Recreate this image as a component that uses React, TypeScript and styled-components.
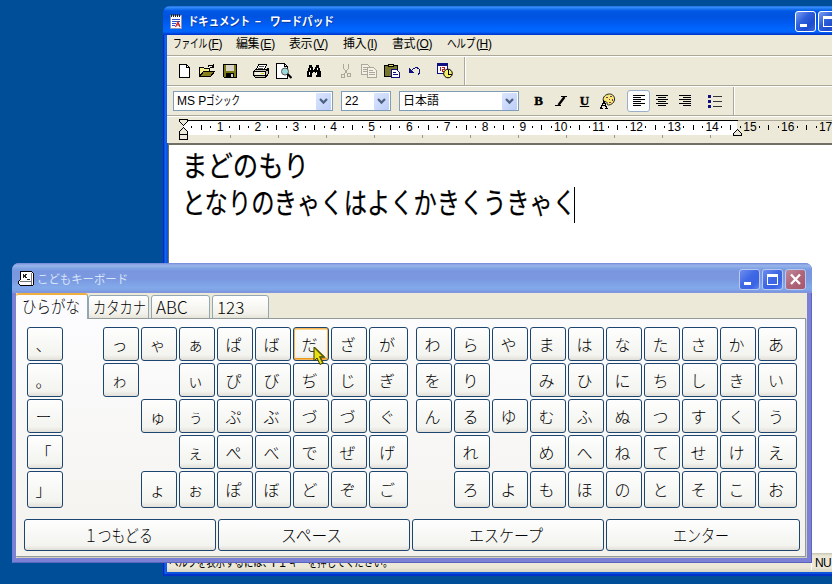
import React from "react";
import styled, { createGlobalStyle, css } from "styled-components";

const Global = createGlobalStyle`
  * { box-sizing: border-box; }
  body { margin: 0; overflow: hidden; font-family: "Liberation Sans", "Noto Sans CJK JP", sans-serif; font-size: 12px; color: #000; }
`;

const Desktop = styled.div`
  position: relative;
  width: 832px;
  height: 584px;
  overflow: hidden;
  background: #004e98;
`;

/* ---------- fitted text ---------- */
const FitBox = styled.span<{ $w: number }>`
  display: inline-block;
  flex: none;
  width: ${(p) => p.$w}px;
  white-space: pre;
`;
const FitInner = styled.span<{ $s: number; $size: number }>`
  display: inline-block;
  font-family: "Noto Sans CJK JP", sans-serif;
  font-size: ${(p) => p.$size}px;
  line-height: 1;
  transform: scaleX(${(p) => p.$s});
  transform-origin: 0 50%;
`;
const Fit = ({ t, w, size = 12 }: { t: string; w: number; size?: number }) => (
  <FitBox $w={w}>
    <FitInner $s={w / (t.length * size)} $size={size}>{t}</FitInner>
  </FitBox>
);

/* ---------- window chrome ---------- */
const WordPad = styled.div`
  position: absolute;
  left: 163px;
  top: 6px;
  width: 700px;
  height: 570px;
  display: flex;
  flex-direction: column;
  border-radius: 7px 0 0 0;
  overflow: hidden;
  background: linear-gradient(90deg, #0019cf 0, #0831d9 1px, #166aee 2px, #0855dd 4px, #0855dd 100%);
  box-shadow: inset 0 -2px 0 #0030c8;
  padding: 0 0 4px 4px;
`;
const TitleBar = styled.div`
  flex: none;
  height: 29px;
  margin-left: -4px;
  padding: 2px 0 0 6px;
  display: flex;
  align-items: center;
  background: linear-gradient(180deg, #1c5fd8 0, #3a92fa 1px, #1a74f0 3px, #0058e4 5px, #0053e0 11px, #005cf4 18px, #0066ff 23px, #0064fc 26px, #003dd7 28px, #0038c8 29px);
`;
const TitleText = styled.div`
  display: flex;
  align-items: center;
  gap: 5px;
  width: 610px;
  padding-left: 3px;
  color: #fff;
  font-weight: 700;
  text-shadow: 1px 1px 0 #0b3a9c;
`;
const WinButton = styled.div<{ $kind: "active" | "idle" | "close" }>`
  flex: none;
  width: 21px;
  height: 21px;
  border-radius: 3px;
  border: 1px solid ${(p) => (p.$kind === "active" ? "#fff" : "#b9c8f0")};
  margin-right: 2px;
  ${(p) =>
    p.$kind === "close"
      ? css`background: linear-gradient(135deg, #c08a9c, #b0667a 50%, #a8566c);`
      : p.$kind === "active"
      ? css`background: linear-gradient(135deg, #7d9ff0, #2e5fdb 40%, #1c4bd0 70%, #3767e0);`
      : css`background: linear-gradient(135deg, #6d8ff0, #3f68e4 45%, #3a63e6 75%, #5a86f0);`}
  svg { display: block; }
`;
const MinGlyph = () => (
  <svg width="19" height="19" shapeRendering="crispEdges"><rect x="4" y="12" width="7" height="3" fill="#fff" /></svg>
);
const MaxGlyph = () => (
  <svg width="19" height="19" shapeRendering="crispEdges">
    <path d="M4 4h11v11H4z M5 7v7h9V7z" fillRule="evenodd" fill="#fff" />
  </svg>
);
const CloseGlyph = () => (
  <svg width="19" height="19"><path d="M5 4.500l9 9.500M14 4.500L5 14" stroke="#fff" strokeWidth="2.300" /></svg>
);

/* ---------- WordPad bars ---------- */
const MenuBar = styled.div`
  flex: none;
  height: 21px;
  display: flex;
  align-items: center;
  padding: 0 0 2px 6px;
  background: #ece9d8;
  border-bottom: 1px solid #aca899;
`;
const MenuItem = styled.div<{ $w: number }>`
  flex: none;
  width: ${(p) => p.$w}px;
  display: flex;
  align-items: center;
  font-size: 12px;
  line-height: 16px;
  letter-spacing: -0.4px;
`;
const ToolRow = styled.div`
  flex: none;
  height: 30px;
  display: flex;
  background: #ece9d8;
  border-top: 1px solid #fff;
  border-bottom: 1px solid #aca899;
`;
const ToolGroup = styled.div<{ $w: number; $pad: number }>`
  flex: none;
  width: ${(p) => p.$w}px;
  display: flex;
  align-items: center;
  padding-left: ${(p) => p.$pad}px;
  border-right: 1px solid #aca899;
  box-shadow: 1px 0 0 #fff;
`;
const Slot = styled.div<{ $on?: boolean }>`
  flex: none;
  width: 23px;
  height: 22px;
  display: flex;
  align-items: center;
  justify-content: center;
  border-radius: 3px;
  font-family: "Liberation Serif", serif;
  font-size: 13px;
  font-weight: 700;
  -webkit-text-stroke: 0.4px #000;
  ${(p) => p.$on && css`background: #fdfdfe; border: 1px solid #98b0cc;`}
`;
const Gap = styled.div<{ $w: number }>`
  flex: none;
  width: ${(p) => p.$w}px;
`;
const Combo = styled.div<{ $w: number }>`
  flex: none;
  width: ${(p) => p.$w}px;
  height: 20px;
  display: flex;
  align-items: center;
  background: #fff;
  border: 1px solid #7f9db9;
  padding: 0 1px 0 3px;
  font-size: 12px;
  line-height: 16px;
`;
const ComboValue = styled.div`
  flex: 1;
  display: flex;
  align-items: center;
  padding-bottom: 1px;
`;
const ComboArrow = styled.div`
  width: 15px;
  height: 17px;
  border-radius: 1px;
  background: linear-gradient(135deg, #dbe6fe, #bccdf8);
  display: flex;
  align-items: center;
  justify-content: center;
`;
const Arrow = () => (
  <ComboArrow><svg width="9" height="7"><path d="M1 1l3.500 3.600L8 1" fill="none" stroke="#4d6185" strokeWidth="2.200" /></svg></ComboArrow>
);

/* ---------- ruler ---------- */
const RulerArea = styled.div`
  position: relative;
  flex: none;
  height: 27px;
  padding: 3px 0 0 16px;
  background: #ece9d8;
  border-top: 1px solid #fff;
  overflow: hidden;
`;
const RulerStrip = styled.div`
  width: 660px;
  height: 15px;
  display: flex;
  align-items: center;
  padding: 0 0 2px 4px;
  background: linear-gradient(90deg, #fff 554px, #ece9d8 554px);
  border-top: 1px solid;
  border-image: linear-gradient(90deg, #000 554px, #aca899 554px) 1;
  border-bottom: 0;
`;
const Unit = styled.div`
  flex: none;
  width: 37.85px;
  display: grid;
  grid-template-columns: repeat(4, 9.46px);
  justify-items: center;
  align-items: center;
`;
const Dot = styled.i`
  width: 1px;
  height: 2px;
  background: #000;
`;
const Tick = styled.i`
  width: 1px;
  height: 5px;
  background: #000;
`;
const Num = styled.span`
  width: 18px;
  text-align: center;
  font-size: 12px;
  line-height: 13px;
`;
const TabStops = styled.div`
  width: 552px;
  height: 3px;
  background: repeating-linear-gradient(90deg, transparent 0 47px, #98958a 47px 48px);
`;
const Marker = styled.svg<{ $x: number; $y: number }>`
  position: absolute;
  left: ${(p) => p.$x}px;
  top: ${(p) => p.$y}px;
`;

/* ---------- document & status ---------- */
const Document = styled.div`
  flex: 1;
  margin-left: 1px;
  padding: 5px 0 0 13px;
  background: #fff;
  border-top: 2px solid #716f64;
  border-left: 1px solid #716f64;
`;
const Line = styled.div`
  height: 37px;
  display: flex;
  align-items: center;
  line-height: 29px;
  -webkit-text-stroke: 0.2px #000;
`;
const Caret = styled.div`
  width: 1px;
  height: 36px;
  margin: -2px 0 0 -4px;
  background: #000;
`;
const StatusBar = styled.div`
  flex: none;
  height: 19px;
  display: flex;
  align-items: center;
  padding-left: 2px;
  background: linear-gradient(180deg, #c8c5b4 0, #ece9d8 3px, #ece9d8 14px, #d8d5c4 100%);
  font-size: 12px;
`;
const StatusText = styled.div`
  width: 643px;
  display: flex;
  align-items: center;
  border-right: 1px solid #fff;
`;
const StatusCell = styled.div`
  padding-left: 3px;
  letter-spacing: -0.7px;
`;

/* ---------- keyboard window ---------- */
const Keyboard = styled.div`
  position: absolute;
  left: 12px;
  top: 263px;
  width: 800px;
  height: 300px;
  padding: 0 5px 5px 4px;
  display: flex;
  flex-direction: column;
  border-radius: 7px 7px 0 0;
  overflow: hidden;
  background: #7b82d6;
  box-shadow: inset 1px 0 0 #6f7fd4, inset -1px -1px 0 #5c64c0;
`;
const KbTitle = styled.div`
  flex: none;
  height: 30px;
  margin: 0 -5px 0 -4px;
  padding: 2px 4px 0 6px;
  display: flex;
  align-items: center;
  background: linear-gradient(180deg, #7488dc 0, #94afe8 2px, #97b4e9 3px, #82a5e4 5px, #7996de 8px, #7b99e1 17px, #82a9e9 24px, #80a5e7 27px, #7b92dc 29px, #8c9cdc 30px);
`;
const KbTitleText = styled.div`
  width: 705px;
  padding: 1px 0 0 3px;
  display: flex;
  color: #d8e4f8;
`;
const Client = styled.div`
  flex: 1;
  display: flex;
  flex-direction: column;
  background: #ece9d8;
  padding: 0 1px 1px 0;
`;
const Tabs = styled.div`
  flex: none;
  height: 26px;
  display: flex;
  align-items: flex-end;
  gap: 2px;
  margin-bottom: -1px;
`;
const Tab = styled.div<{ $w: number; $active?: boolean }>`
  flex: none;
  width: ${(p) => p.$w}px;
  height: 24px;
  display: flex;
  align-items: center;
  padding: 0 0 0 4px;
  font-family: "Noto Sans CJK JP", sans-serif;
  font-size: 17px;
  font-weight: 300;
  line-height: 20px;
  border: 1px solid #91a7b4;
  border-radius: 3px 3px 0 0;
  background: linear-gradient(180deg, #fff, #f2f1ea 80%, #e6e4d8);
  ${(p) =>
    p.$active &&
    css`
      position: relative;
      height: 26px;
      margin-right: -2px;
      padding: 0 0 2px 6px;
      border-bottom: 0;
      border-top: 2px solid #f0b040;
      border-left: 0;
      background: #fcfcfe;
    `}
`;
const Panel = styled.div`
  flex: 1;
  display: flex;
  flex-direction: column;
  gap: 11px;
  padding: 8px 0 0 8px;
  border: 1px solid #919b9c;
  border-left: 0;
  box-shadow: 1px 1px 0 #d0cebf;
  background: linear-gradient(180deg, #fcfcfe, #f3f2ed);
`;
const Keys = styled.div`
  display: grid;
  padding-left: 3px;
  gap: 2px;
  grid-template-columns: repeat(9, 36px) 39px 4px repeat(9, 36px) 39px;
  grid-template-rows: repeat(4, 34px) 37px;
`;
const Key = styled.div<{ $hot?: boolean }>`
  display: flex;
  align-items: center;
  justify-content: center;
  padding: 0 3px 1px 0;
  font-family: "Noto Sans CJK JP", sans-serif;
  font-size: 16px;
  font-weight: 300;
  line-height: 18px;
  border: 1px solid #1c4670;
  border-radius: 3px;
  background: linear-gradient(180deg, #fefefe, #f3f3ef 85%, #e2dfd8);
  ${(p) => p.$hot && css`box-shadow: inset 0 0 0 1px #f4b658, inset 0 -2px 0 #e79a1c, inset 0 2px 0 #fdd78f;`}
`;
const WideRow = styled.div`
  display: grid;
  gap: 2px;
  grid-template-columns: 192px 192px 192px 194px;
  height: 32px;
`;
const WideKey = styled(Key)`
  padding: 0 4px 0 0;
`;
const Pointer = styled.svg`
  position: absolute;
  left: 313px;
  top: 346px;
`;

/* ---------- icons ---------- */
const Px = ({ children, w = 16, h = 16 }: { children: React.ReactNode; w?: number; h?: number }) => (
  <svg width={w} height={h} viewBox={`0 0 ${w} ${h}`} shapeRendering="crispEdges" fill="none" stroke="none">{children}</svg>
);
const AppIcon = () => (
  <Px>
    <path d="M1.500 1.500h11v13h-11z" fill="#fff" stroke="#8a98c0" />
    <path d="M2 0h1v3H2zM4 0h1v3H4zM6 0h1v3H6zM8 0h1v3H8zM10 0h1v3h-1z" fill="#222" />
    <path d="M3 5.500h8M3 7.500h8M3 9.500h4M3 11.500h3" stroke="#2c50c8" />
    <path d="M6.500 13l2.500-5 2 5M8 11h3" stroke="#d02020" strokeWidth="1.200" shapeRendering="auto" />
  </Px>
);
const NewIcon = () => (
  <Px><path d="M3.500 1.500h7l3 3v10h-10z" fill="#fff" stroke="#000" /><path d="M10.500 1.500v3h3" stroke="#000" /></Px>
);
const OpenIcon = () => (
  <Px>
    <path d="M.5 13.500v-9h4l1 1h5v3" fill="#f4ee8a" stroke="#000" />
    <path d="M.5 13.500l4-5h11l-4 5z" fill="#87801c" stroke="#000" />
    <path d="M9 3.500c1-2 4-2 5 .5M14.500 1v3.500H11" stroke="#000" />
  </Px>
);
const SaveIcon = () => (
  <Px>
    <path d="M1.500 1.500h13v13h-12l-1-1z" fill="#7b7a18" stroke="#000" />
    <path d="M4 2h8v6H4z" fill="#d8d5c8" /><path d="M4 10h8v5H4z" fill="#000" /><path d="M9 11h2v3H9z" fill="#d8d5c8" />
  </Px>
);
const PrintIcon = () => (
  <Px>
    <path d="M3.500 6.500l2-5h8l-2 5z" fill="#fff" stroke="#000" />
    <path d="M6 3.500h5M5 5.500h5" stroke="#555" />
    <path d="M.5 8.500l2-2h11l2-1v5l-3 4h-10l-2-2z" fill="#c8c5b4" stroke="#000" />
    <path d="M1 8.500h11.500M1 12.500h11M12.500 8.500v5M12.500 8.500l3-2" stroke="#000" /><path d="M2 9h10v3H2z" fill="#f4f2e6" /><path d="M8 10h3v1H8z" fill="#d8cc20" />
  </Px>
);
const PreviewIcon = () => (
  <Px>
    <path d="M.5 .5h8l3 3v12h-11z" fill="#fff" stroke="#000" /><path d="M8.500 .5v3h3" stroke="#000" />
    <circle cx="9" cy="8.500" r="3.500" fill="#9adada" stroke="#555" shapeRendering="auto" />
    <path d="M11.500 11l4 4" stroke="#000" strokeWidth="2.200" shapeRendering="auto" />
  </Px>
);
const FindIcon = () => (
  <Px>
    <path d="M3 2h3v2h1v2h2V4h1V2h3v3h1v3h1v6h-5v-4H9V9H7v1H6v4H1V8h1V5h1z" fill="#000" />
    <path d="M4 5h1v2H4zM3 9h1v3H3zM11 5h1v2h-1zM10 9h1v3h-1zM7 6h1v1H7z" fill="#fff" />
  </Px>
);
const CutIcon = () => (
  <Px>
    <path d="M5.500 1v4l4 6M10.500 1v4l-4 6" stroke="#aca899" />
    <path d="M3.500 11.500h3v3h-3zM9.500 10.500h3v3h-3z" stroke="#aca899" />
  </Px>
);
const CopyIcon = () => (
  <Px>
    <path d="M.5 1.500h6l2 2v8h-8z" fill="#f4f2e6" stroke="#aca899" /><path d="M2 4.500h4M2 6.500h5M2 8.500h5" stroke="#aca899" />
    <path d="M6.500 4.500h6l3 3v7h-9z" fill="#f4f2e6" stroke="#aca899" /><path d="M8 7.500h4M8 9.500h6M8 11.500h6" stroke="#aca899" />
  </Px>
);
const PasteIcon = () => (
  <Px>
    <path d="M.5 2.500h13v11H.5z" fill="#77762c" stroke="#000" />
    <path d="M4.500 3.500v-2h5v2z" fill="#e8e060" stroke="#000" />
    <path d="M7.500 6.500h5l3 3v5h-8z" fill="#fff" stroke="#101080" /><path d="M9 9.500h3M9 11.500h5" stroke="#101080" />
  </Px>
);
const UndoIcon = () => (
  <Px>
    <path d="M2 5v5h5z" fill="#101080" />
    <path d="M4.500 7.500c2-3 6-3.500 7.500-1.500s1 4-1 5.500" stroke="#101080" strokeWidth="1.200" />
  </Px>
);
const DateIcon = () => (
  <Px>
    <path d="M.5 .5h10v10H.5z" fill="#fff" stroke="#101080" /><path d="M0 0h11v3H0z" fill="#101080" />
    <path d="M3 4v4M5 4.500h2.500v1.500H5.500v2H8" stroke="#b02020" />
    <circle cx="11" cy="10.500" r="4.300" fill="#f4ee70" stroke="#000" shapeRendering="auto" /><path d="M11.500 7v4h3" stroke="#000" />
  </Px>
);
const ItalicIcon = () => (
  <Px w={14} h={11}>
    <path d="M6 .5h6M0 9.500h6" stroke="#000" /><path d="M9.500 1l-6 8" stroke="#000" strokeWidth="2.400" shapeRendering="auto" />
  </Px>
);
const PaletteIcon = () => (
  <Px>
    <path d="M3.500 8C2 4 6 1 9.500 1S15 4 14.500 7 11 12 8.500 12 8 9.500 6.500 9z" fill="#f2e878" stroke="#222" shapeRendering="auto" />
    <path d="M6 4h2v1H6zM10 3h2v1h-2zM12 6h1v2h-1zM9 6h1v1H9zM9 9h2v1H9z" fill="#8a2a5a" />
    <path d="M1 15l3-7 2.500 7M2 12.500h4M0 15.500h3M5 15.500h3" stroke="#000" strokeWidth="1.300" />
  </Px>
);
const AlignIcon = ({ rows }: { rows: [number, number][] }) => (
  <Px w={12} h={12}>{rows.map(([x, w], i) => <rect key={i} x={x} y={i * 2} width={w} height={1} fill="#000" />)}</Px>
);
const ListIcon = () => (
  <Px w={14} h={13}>
    <path d="M0 0h3v3H0zM0 5h3v3H0zM0 10h3v3H0z" fill="#101080" /><path d="M5 1h9v1H5zM5 6h9v1H5zM5 11h9v1H5z" fill="#333" />
  </Px>
);
const KeyIcon = () => (
  <Px>
    <path d="M2.500 .5h11l2 2v11l-1 1H2.500l-2-2v-2l2-2z" fill="#fff" stroke="#000" />
    <path d="M2 10.500h11v3M13.500 2v8" stroke="#777" />
    <path d="M5.500 3v4M8.500 3L6.500 5l2 2M9 8.500h3" stroke="#222" />
  </Px>
);

const menus: [string, number, string, number][] = [
  ["ファイル", 35, "F", 63], ["編集", 24, "E", 53], ["表示", 24, "V", 54],
  ["挿入", 24, "I", 49], ["書式", 24, "O", 55], ["ヘルプ", 29, "H", 60],
];

const rows = [
  "、　っゃぁぱばだざが　わらやまはなたさかあ",
  "。　ゎ　ぃぴびぢじぎ　をり　みひにちしきい",
  "ー　　ゅぅぷぶづづぐ　んるゆむふぬつすくう",
  "「　　　ぇぺべでぜげ　　れ　めへねてせけえ",
  "」　　ょぉぽぼどぞご　　ろよもほのとそこお",
];

export default function App() {
  return (
    <>
      <Global />
      <Desktop>
        <WordPad>
          <TitleBar>
            <AppIcon />
            <TitleText>
              <Fit t="ドキュメント" w={62} />
              <Fit t="−" w={10} />
              <Fit t="ワードパッド" w={64} />
            </TitleText>
            <WinButton $kind="active"><MinGlyph /></WinButton>
            <WinButton $kind="active"><MaxGlyph /></WinButton>
          </TitleBar>
          <MenuBar>
            {menus.map(([t, w, k, full]) => (
              <MenuItem key={k} $w={full}><Fit t={t} w={w} />(<u>{k}</u>)</MenuItem>
            ))}
          </MenuBar>
          <ToolRow>
            <ToolGroup $w={298} $pad={5}>
              <Slot><NewIcon /></Slot><Slot><OpenIcon /></Slot><Slot><SaveIcon /></Slot>
              <Gap $w={8} />
              <Slot><PrintIcon /></Slot><Slot><PreviewIcon /></Slot>
              <Gap $w={7} />
              <Slot><FindIcon /></Slot>
              <Gap $w={9} />
              <Slot><CutIcon /></Slot><Slot><CopyIcon /></Slot><Slot><PasteIcon /></Slot><Slot><UndoIcon /></Slot>
              <Gap $w={7} />
              <Slot><DateIcon /></Slot>
            </ToolGroup>
          </ToolRow>
          <ToolRow>
            <ToolGroup $w={567} $pad={6}>
              <Combo $w={160}><ComboValue>MS P<Fit t="ゴシック" w={34} /></ComboValue><Arrow /></Combo>
              <Gap $w={8} />
              <Combo $w={50}><ComboValue>22</ComboValue><Arrow /></Combo>
              <Gap $w={8} />
              <Combo $w={120}><ComboValue><Fit t="日本語" w={36} /></ComboValue><Arrow /></Combo>
              <Gap $w={8} />
              <Slot>B</Slot><Slot><ItalicIcon /></Slot><Slot><u>U</u></Slot><Slot><PaletteIcon /></Slot>
              <Gap $w={8} />
              <Slot $on><AlignIcon rows={[[0, 12], [0, 8], [0, 12], [0, 8], [0, 12], [0, 8]]} /></Slot>
              <Slot><AlignIcon rows={[[0, 12], [2, 8], [0, 12], [2, 8], [0, 12], [2, 8]]} /></Slot>
              <Slot><AlignIcon rows={[[0, 12], [4, 8], [0, 12], [4, 8], [0, 12], [4, 8]]} /></Slot>
              <Gap $w={7} />
              <Slot><ListIcon /></Slot>
            </ToolGroup>
          </ToolRow>
          <RulerArea>
            <RulerStrip>
              {Array.from({ length: 17 }, (_, i) => (
                <Unit key={i}><Dot /><Tick /><Dot /><Num>{i + 1}</Num></Unit>
              ))}
            </RulerStrip>
            <TabStops />
            <Marker $x={12} $y={1} width="9" height="25" shapeRendering="crispEdges">
              <path d="M.5 1.500h8v2l-4 4-4-4z M.5 16.500v-3l4-4 4 4v3z M.5 16.500h8v5h-8z" fill="#ece9d8" stroke="#000" />
            </Marker>
            <Marker $x={566} $y={9} width="10" height="12" shapeRendering="crispEdges">
              <path d="M.5 9.500v-2l4-4 4 4v2z" fill="#ece9d8" stroke="#000" />
            </Marker>
          </RulerArea>
          <Document>
            <Line><Fit t="まどのもり" w={127} size={29} /></Line>
            <Line>
              <Fit t="となりのきゃくはよくかきくうきゃく" w={396} size={29} />
              <Caret />
            </Line>
          </Document>
          <StatusBar>
            <StatusText>
              <Fit t="ヘルプを表示するには、" w={103} />F1&nbsp;<Fit t="キーを押してください。" w={104} />
            </StatusText>
            <StatusCell>NU</StatusCell>
          </StatusBar>
        </WordPad>

        <Keyboard>
          <KbTitle>
            <KeyIcon />
            <KbTitleText><Fit t="こどもキーボード" w={91} /></KbTitleText>
            <WinButton $kind="idle"><MinGlyph /></WinButton>
            <WinButton $kind="idle"><MaxGlyph /></WinButton>
            <WinButton $kind="close"><CloseGlyph /></WinButton>
          </KbTitle>
          <Client>
            <Tabs>
              <Tab $w={72} $active><Fit t="ひらがな" w={58} size={17} /></Tab>
              <Tab $w={61}><Fit t="カタカナ" w={53} size={17} /></Tab>
              <Tab $w={59}>ABC</Tab>
              <Tab $w={57}>123</Tab>
            </Tabs>
            <Panel>
              <Keys>
                {rows.flatMap((row, r) =>
                  [...row].map((c, i) =>
                    c === "　" ? <span key={`${r}-${i}`} /> : <Key key={`${r}-${i}`} $hot={c === "だ"}>{c}</Key>
                  )
                )}
              </Keys>
              <WideRow>
                <WideKey><Fit t="１つもどる" w={69} size={17} /></WideKey>
                <WideKey><Fit t="スペース" w={63} size={17} /></WideKey>
                <WideKey><Fit t="エスケープ" w={75} size={17} /></WideKey>
                <WideKey><Fit t="エンター" w={56} size={17} /></WideKey>
              </WideRow>
            </Panel>
          </Client>
        </Keyboard>

        <Pointer width="13" height="20" viewBox="0 0 13 20">
          <path d="M1 1v14l3-3 3 6.500 3-1.500-3-6h4.500z" fill="#e8e010" stroke="#3a3a00" strokeWidth="1" />
          <path d="M1.500 1.500l9.500 9.500H7l3 6" fill="none" stroke="#5a5800" strokeWidth="1.500" />
        </Pointer>
      </Desktop>
    </>
  );
}
